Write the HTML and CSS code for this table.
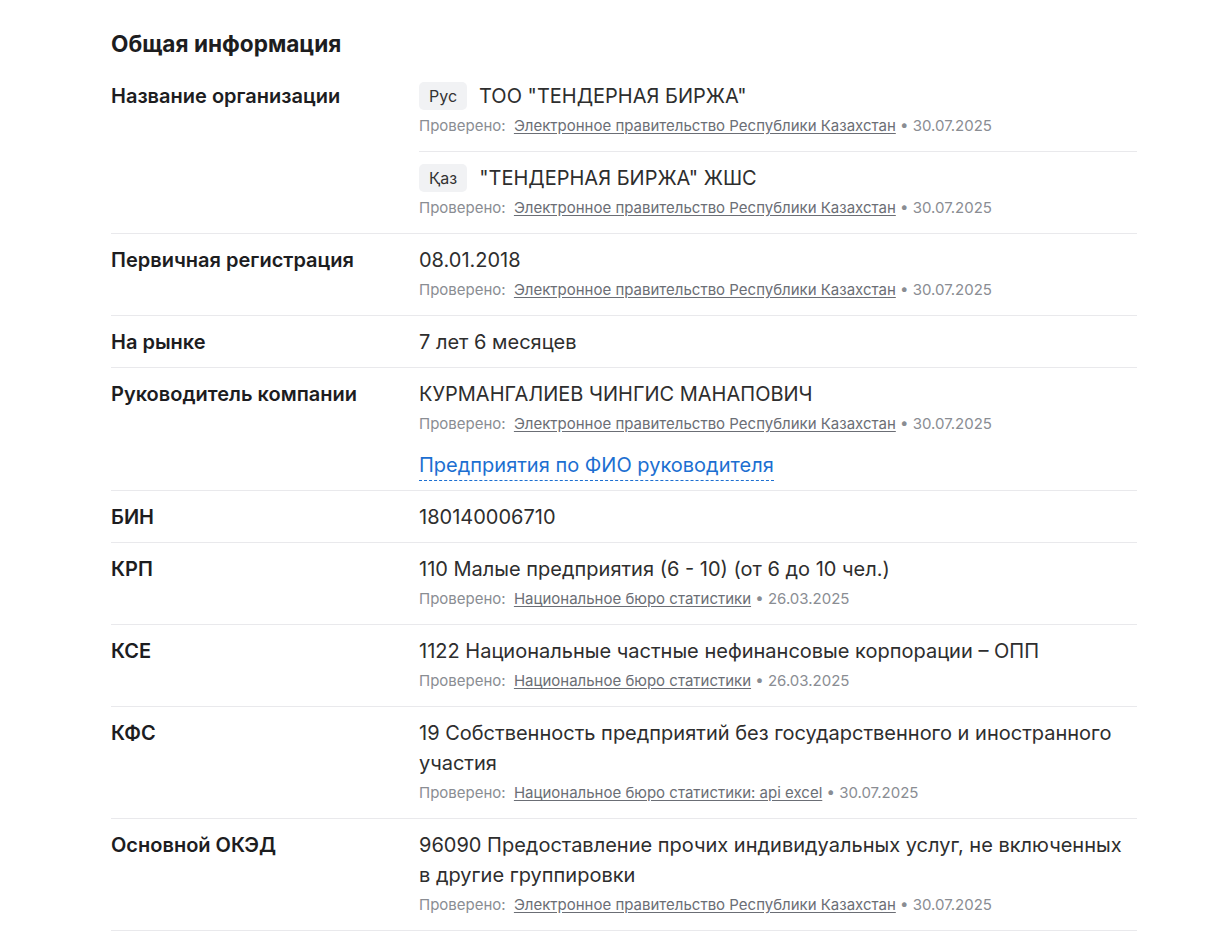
FILE: index.html
```html
<!DOCTYPE html>
<html lang="ru">
<head>
<meta charset="UTF-8" />
<title>Общая информация</title>
<link rel="stylesheet" href="styles.css">
</head>
<body>

<section class="info">
  <h2 class="info-title">Общая информация</h2>

  <div class="info-row">
    <div class="info-label">Название организации</div>
    <div class="info-values">
      <div class="info-item">
        <div class="info-value"><span class="lang">Рус</span>ТОО "ТЕНДЕРНАЯ БИРЖА"</div>
        <div class="checked">Проверено: <a href="#">Электронное правительство Республики Казахстан</a> • 30.07.2025</div>
      </div>
      <div class="info-item">
        <div class="info-value"><span class="lang">Қаз</span>"ТЕНДЕРНАЯ БИРЖА" ЖШС</div>
        <div class="checked">Проверено: <a href="#">Электронное правительство Республики Казахстан</a> • 30.07.2025</div>
      </div>
    </div>
  </div>

  <div class="info-row">
    <div class="info-label">Первичная регистрация</div>
    <div class="info-values">
      <div class="info-item">
        <div class="info-value">08.01.2018</div>
        <div class="checked">Проверено: <a href="#">Электронное правительство Республики Казахстан</a> • 30.07.2025</div>
      </div>
    </div>
  </div>

  <div class="info-row">
    <div class="info-label">На рынке</div>
    <div class="info-values">
      <div class="info-item">
        <div class="info-value">7 лет 6 месяцев</div>
      </div>
    </div>
  </div>

  <div class="info-row">
    <div class="info-label">Руководитель компании</div>
    <div class="info-values">
      <div class="info-item">
        <div class="info-value">КУРМАНГАЛИЕВ ЧИНГИС МАНАПОВИЧ</div>
        <div class="checked">Проверено: <a href="#">Электронное правительство Республики Казахстан</a> • 30.07.2025</div>
        <div class="more"><a href="#" class="dashed">Предприятия по ФИО руководителя</a></div>
      </div>
    </div>
  </div>

  <div class="info-row">
    <div class="info-label">БИН</div>
    <div class="info-values">
      <div class="info-item">
        <div class="info-value">180140006710</div>
      </div>
    </div>
  </div>

  <div class="info-row">
    <div class="info-label">КРП</div>
    <div class="info-values">
      <div class="info-item">
        <div class="info-value">110 Малые предприятия (6 - 10) (от 6 до 10 чел.)</div>
        <div class="checked">Проверено: <a href="#">Национальное бюро статистики</a> • 26.03.2025</div>
      </div>
    </div>
  </div>

  <div class="info-row">
    <div class="info-label">КСЕ</div>
    <div class="info-values">
      <div class="info-item">
        <div class="info-value">1122 Национальные частные нефинансовые корпорации – ОПП</div>
        <div class="checked">Проверено: <a href="#">Национальное бюро статистики</a> • 26.03.2025</div>
      </div>
    </div>
  </div>

  <div class="info-row">
    <div class="info-label">КФС</div>
    <div class="info-values">
      <div class="info-item">
        <div class="info-value">19 Собственность предприятий без государственного и иностранного участия</div>
        <div class="checked">Проверено: <a href="#">Национальное бюро статистики: api excel</a> • 30.07.2025</div>
      </div>
    </div>
  </div>

  <div class="info-row">
    <div class="info-label">Основной ОКЭД</div>
    <div class="info-values">
      <div class="info-item">
        <div class="info-value">96090 Предоставление прочих индивидуальных услуг, не включенных в другие группировки</div>
        <div class="checked">Проверено: <a href="#">Электронное правительство Республики Казахстан</a> • 30.07.2025</div>
      </div>
    </div>
  </div>
</section>

</body>
</html>
```

FILE: styles.css
```css
/* Reset */
*, *::before, *::after {
  box-sizing: border-box;
}
body, h2, div, a {
  margin: 0;
  padding: 0;
}
body {
  background: #fff;
  font-family: Inter, "Noto Sans", "Liberation Sans", sans-serif;
  color: #222;
}
a {
  color: inherit;
}

/* Block */
.info {
  width: 1026px;
  margin-left: 111px;
  padding-top: 30px;
}
.info-title {
  font-size: 22.6px;
  font-weight: 700;
  line-height: 28px;
  color: #1d1d1f;
  margin-bottom: 12px;
}

/* Rows */
.info-row {
  display: flex;
  border-bottom: 1px solid #e9e9ec;
}
.info-label {
  width: 308px;
  flex-shrink: 0;
  padding-top: 11px;
  font-size: 20px;
  line-height: 30px;
  font-weight: 600;
  color: #1d1d1f;
}
.info-values {
  flex: 1;
}
.info-item {
  padding: 11px 0 10px;
}
.info-item + .info-item {
  border-top: 1px solid #e9e9ec;
}
.info-value {
  font-size: 20px;
  line-height: 30px;
  color: #2e2e2e;
}
.lang {
  display: inline-block;
  vertical-align: top;
  margin-top: 1px;
  background: #f1f2f4;
  border-radius: 5px;
  font-size: 16px;
  line-height: 28px;
  padding: 0 10px;
  margin-right: 12px;
  color: #333;
}

/* Source line */
.checked {
  font-size: 15px;
  line-height: 20px;
  margin: 5px 0;
  color: #8a8d93;
}
.checked a {
  color: #6b6e75;
  text-decoration: underline;
  text-underline-offset: 2px;
  margin-left: 4px;
}

/* Link */
.more {
  margin-top: 16px;
  font-size: 20px;
  line-height: 30px;
}
.dashed {
  color: #1c6fd1;
  text-decoration: none;
  padding-bottom: 3px;
  border-bottom: 1px dashed #1c6fd1;
}
```
